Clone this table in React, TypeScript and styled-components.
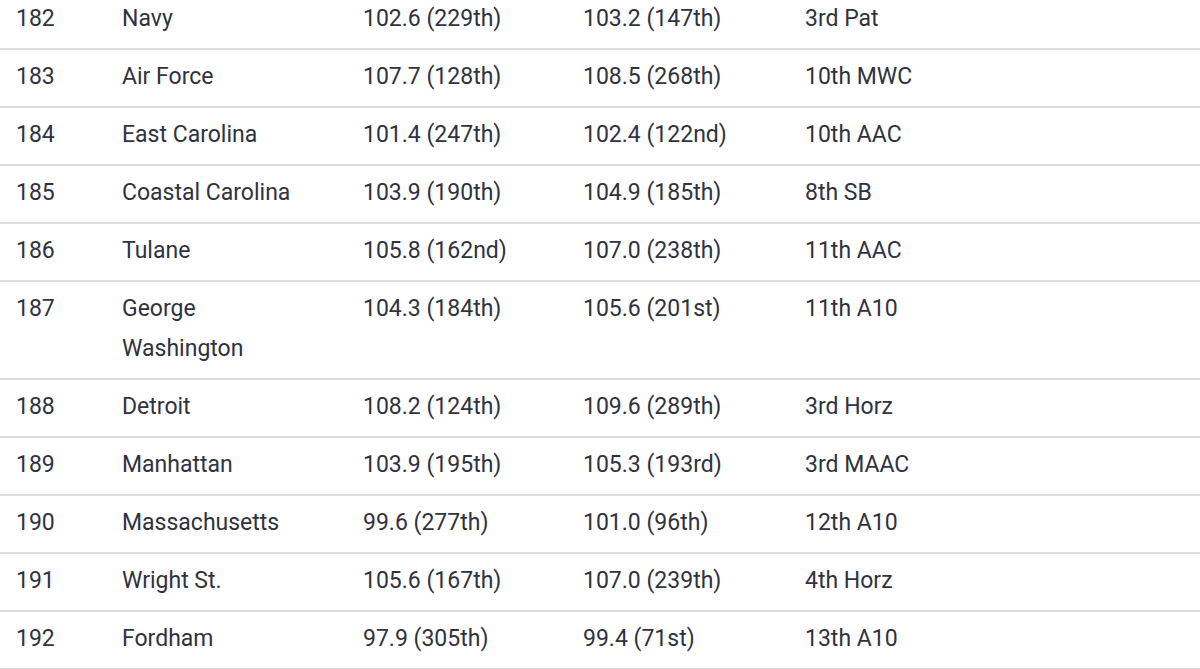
import React from "react";
import styled, { createGlobalStyle } from "styled-components";

const Global = createGlobalStyle`
  html, body { margin: 0; padding: 0; background: #ffffff; }
  body { font-family: Roboto, "Noto Sans", "Liberation Sans", sans-serif; overflow: hidden; }
`;

const Table = styled.div`
  display: flex;
  flex-direction: column;
  margin-top: -8px;
  width: 1200px;
`;

const Row = styled.div`
  display: grid;
  grid-template-columns: 106px 241px 220px 222px 1fr;
  border-bottom: 2px solid #dddddd;
`;

const Cell = styled.div`
  padding: 7px 40px 9px 16px;
  font-size: 23px;
  line-height: 40px;
  color: #30323f;
  font-weight: 400;
`;

const rows: [string, string, string, string, string][] = [
  ["182", "Navy", "102.6 (229th)", "103.2 (147th)", "3rd Pat"],
  ["183", "Air Force", "107.7 (128th)", "108.5 (268th)", "10th MWC"],
  ["184", "East Carolina", "101.4 (247th)", "102.4 (122nd)", "10th AAC"],
  ["185", "Coastal Carolina", "103.9 (190th)", "104.9 (185th)", "8th SB"],
  ["186", "Tulane", "105.8 (162nd)", "107.0 (238th)", "11th AAC"],
  ["187", "George Washington", "104.3 (184th)", "105.6 (201st)", "11th A10"],
  ["188", "Detroit", "108.2 (124th)", "109.6 (289th)", "3rd Horz"],
  ["189", "Manhattan", "103.9 (195th)", "105.3 (193rd)", "3rd MAAC"],
  ["190", "Massachusetts", "99.6 (277th)", "101.0 (96th)", "12th A10"],
  ["191", "Wright St.", "105.6 (167th)", "107.0 (239th)", "4th Horz"],
  ["192", "Fordham", "97.9 (305th)", "99.4 (71st)", "13th A10"],
];

export default function App() {
  return (
    <>
      <Global />
      <Table>
        {rows.map((r) => (
          <Row key={r[0]}>
            {r.map((c, i) => (
              <Cell key={i}>{c}</Cell>
            ))}
          </Row>
        ))}
      </Table>
    </>
  );
}
